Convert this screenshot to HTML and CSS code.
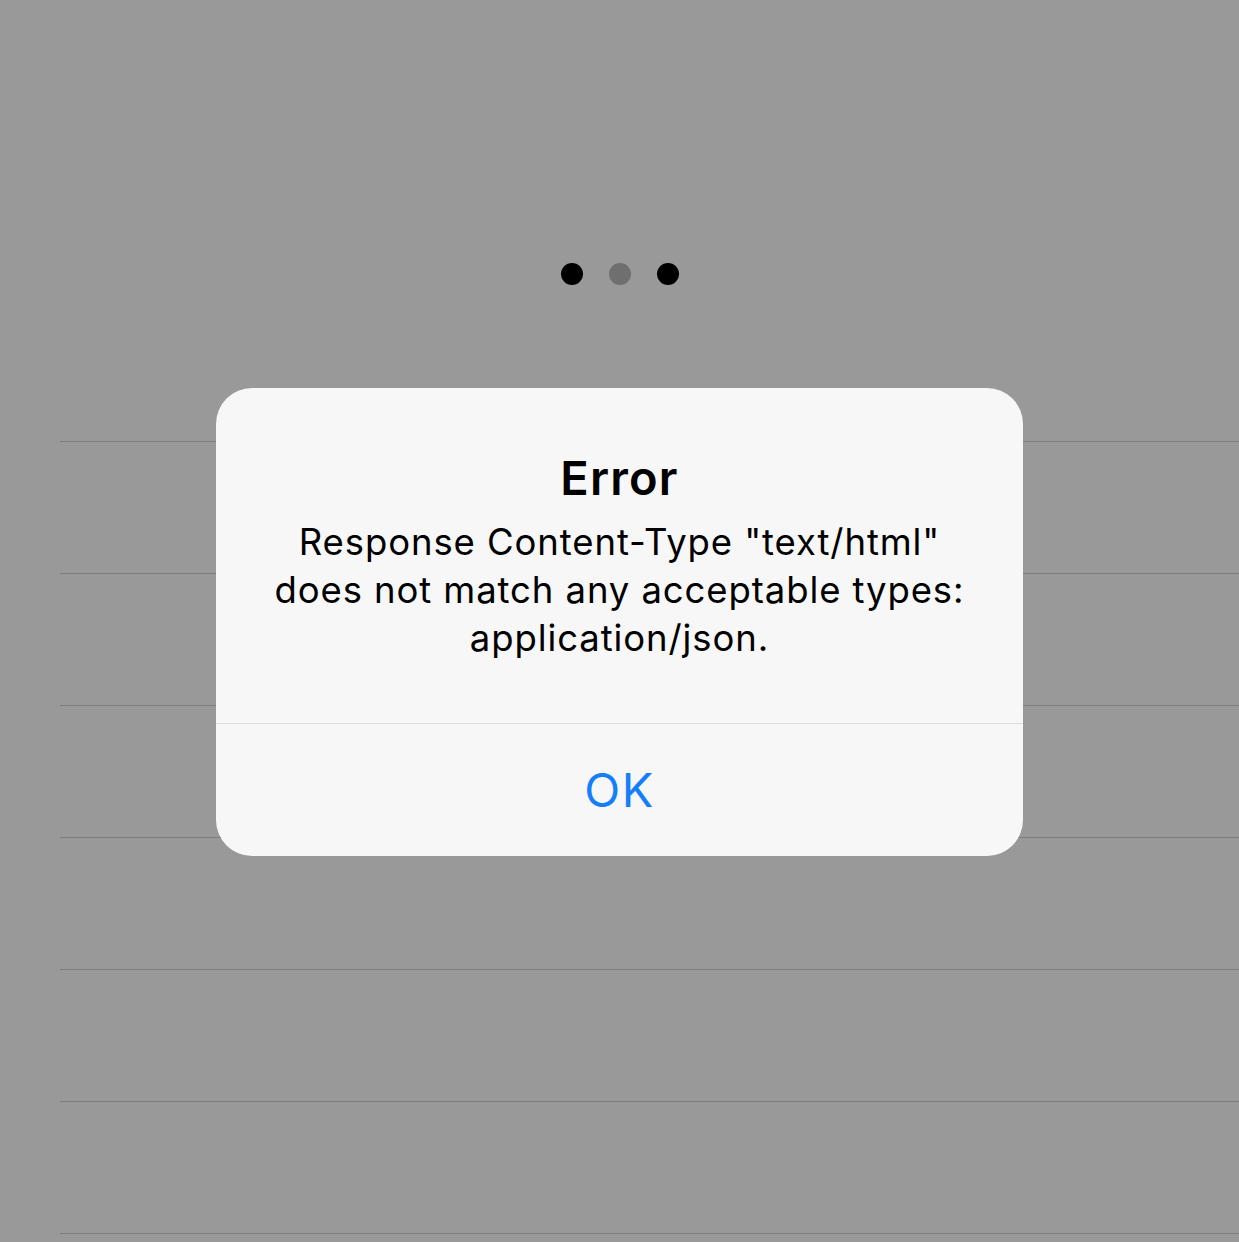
FILE: index.html
```html
<!DOCTYPE html>
<html>
<head>
<meta charset="utf-8">
<link rel="stylesheet" href="styles.css">
</head>
<body>
<div class="screen">
  <div class="dots">
    <span class="dot"></span>
    <span class="dot dim"></span>
    <span class="dot"></span>
  </div>
  <ul class="rows">
    <li></li><li></li><li></li><li></li><li></li><li></li><li></li>
  </ul>
  <div class="alert">
    <div class="alert-body">
      <h1 class="alert-title">Error</h1>
      <p class="alert-msg">Response Content-Type "text/html"<br>does not match any acceptable types:<br>application/json.</p>
    </div>
    <button class="alert-btn">OK</button>
  </div>
</div>
</body>
</html>
```

FILE: styles.css
```css
html, body {
  margin: 0;
  padding: 0;
  background: #999999;
}
.screen {
  position: relative;
  width: 1239px;
  height: 1242px;
  overflow: hidden;
  font-family: Inter, "Liberation Sans", sans-serif;
}
.dots {
  display: flex;
  justify-content: center;
  gap: 26px;
  padding-top: 263px;
  height: 22px;
}
.dot {
  width: 22px;
  height: 22px;
  border-radius: 50%;
  background: #000;
}
.dot.dim {
  background: #6f6f6f;
}
.rows {
  list-style: none;
  margin: 25px 0 0 60px;
  padding: 0;
}
.rows li {
  height: 131px;
  border-bottom: 1px solid #7d7d7d;
}
.alert {
  position: absolute;
  left: 216px;
  top: 388px;
  width: 807px;
  height: 468px;
  background: #f7f7f8;
  border-radius: 36px;
  display: flex;
  flex-direction: column;
  overflow: hidden;
}
.alert-body {
  padding: 62px 10px 61px;
  text-align: center;
  border-bottom: 1px solid #dcdce0;
}
.alert-title {
  margin: 0;
  font-size: 47px;
  line-height: 56px;
  font-weight: 600;
  letter-spacing: 1.2px;
  color: #000;
}
.alert-msg {
  margin: 12px 0 0;
  font-size: 36.5px;
  line-height: 48px;
  letter-spacing: 0.9px;
  color: #000;
}
.alert-btn {
  flex: 1;
  border: 0;
  background: transparent;
  font-family: inherit;
  font-size: 47px;
  letter-spacing: 1.5px;
  color: #147efb;
  padding: 0 0 2px;
}
```
